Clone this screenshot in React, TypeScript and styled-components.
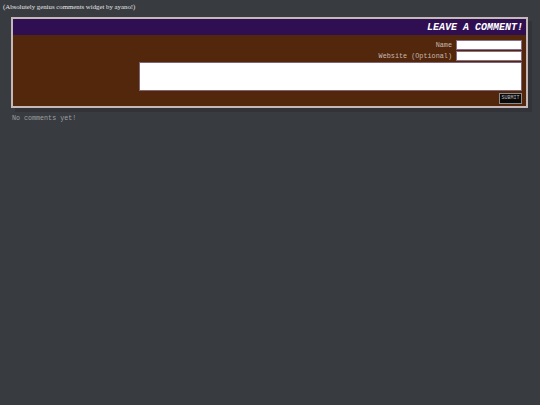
import React from 'react';
import styled, { createGlobalStyle } from 'styled-components';

const GlobalStyle = createGlobalStyle`
  html, body {
    margin: 0;
    padding: 0;
    background: #383b40;
  }
  body {
    width: 540px;
    height: 405px;
    overflow: hidden;
  }
`;

const Page = styled.div`
  padding: 2px 12px 0 11px;
`;

const Credit = styled.p`
  margin: 0 0 0 -8px;
  font-family: "Liberation Serif", serif;
  font-size: 6.8px;
  line-height: 10px;
  color: #e6e6e6;
`;

const Widget = styled.div`
  margin-top: 5px;
  border: 2px solid #c4b8b8;
  background: #52270c;
  box-shadow: 4px 4px 0 rgba(0, 0, 0, 0.12);
`;

const Header = styled.div`
  background: #2f0e52;
  height: 16px;
  display: flex;
  align-items: center;
  justify-content: flex-end;
  padding-right: 3px;
  font-family: "Liberation Mono", monospace;
  font-weight: bold;
  font-style: italic;
  font-size: 10px;
  color: #ffffff;
`;

const Form = styled.form`
  display: flex;
  flex-direction: column;
  align-items: flex-end;
  padding: 5px 4px 2px 0;
`;

const Row = styled.label`
  display: flex;
  align-items: center;
  gap: 4px;
  height: 10px;
  margin-bottom: 1px;
  font-family: "Liberation Mono", monospace;
  font-size: 6.8px;
  color: #c8b8b0;
`;

const Field = styled.input`
  box-sizing: border-box;
  width: 66px;
  height: 10px;
  border: 1px solid #8a6d86;
  background: #ffffff;
  padding: 0;
  margin: 0;
`;

const Message = styled.textarea`
  box-sizing: border-box;
  width: 383px;
  height: 29px;
  border: 1px solid #7f6474;
  background: #ffffff;
  resize: none;
  padding: 0;
  margin: 0;
`;

const Submit = styled.button`
  box-sizing: border-box;
  margin-top: 2px;
  width: 23px;
  height: 11px;
  padding: 0;
  background: #0a0a0a;
  border: 1px solid #8a8a8a;
  color: #b8b8b8;
  font-family: "Liberation Mono", monospace;
  font-size: 5px;
  line-height: 9px;
`;

const Empty = styled.p`
  margin: 6px 0 0 1px;
  font-family: "Liberation Mono", monospace;
  font-size: 6.7px;
  color: #a0a0a0;
`;

export default function App() {
  return (
    <>
      <GlobalStyle />
      <Page>
        <Credit>(Absolutely genius comments widget by ayano!)</Credit>
        <Widget>
          <Header>LEAVE A COMMENT!</Header>
          <Form onSubmit={(e) => e.preventDefault()}>
            <Row>
              Name
              <Field type="text" />
            </Row>
            <Row>
              Website (Optional)
              <Field type="text" />
            </Row>
            <Message />
            <Submit type="submit">SUBMIT</Submit>
          </Form>
        </Widget>
        <Empty>No comments yet!</Empty>
      </Page>
    </>
  );
}
